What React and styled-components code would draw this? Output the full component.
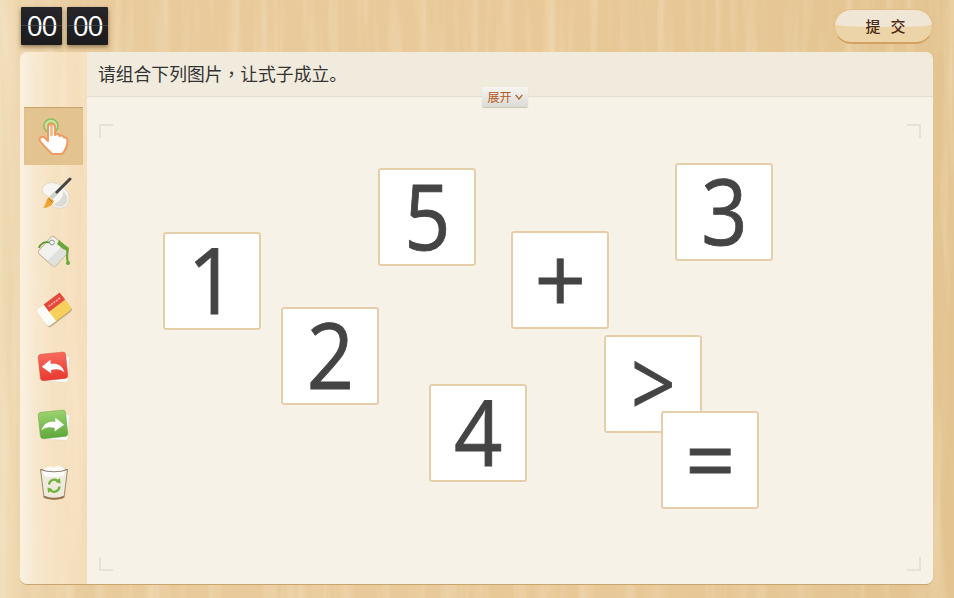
import styled, { createGlobalStyle } from "styled-components";

// vertical wood grain, generated so no image file is needed
const grainSvg = (r, g, b, seed, gain = 1.2, cut = 0.5) =>
  `url("data:image/svg+xml,${encodeURIComponent(
    `<svg xmlns='http://www.w3.org/2000/svg' width='954' height='598'><filter id='g' x='0' y='0' width='100%' height='100%'><feTurbulence type='fractalNoise' baseFrequency='0.07 0.004' numOctaves='4' seed='${seed}'/><feColorMatrix values='0 0 0 0 ${r} 0 0 0 0 ${g} 0 0 0 0 ${b} ${gain} 0 0 0 -${cut}'/></filter><rect width='954' height='598' filter='url(#g)'/></svg>`
  )}")`;

const GlobalStyle = createGlobalStyle`
  html, body {
    margin: 0;
    padding: 0;
    background: #e8cb9c;
  }
  body {
    font-family: "Noto Sans CJK SC", "Liberation Sans", sans-serif;
  }
`;

const Page = styled.div`
  width: 954px;
  height: 598px;
  overflow: hidden;
  display: flex;
  flex-direction: column;
  background-image: ${grainSvg(0.95, 0.83, 0.63, 7, 1, 0.48)}, ${grainSvg(0.78, 0.6, 0.34, 3, 1, 0.46)},
    linear-gradient(90deg, #f1deba 0, #eed6ae 20px, #e9cb9c 90px, #e9c897 60%, #e3c490 100%);
`;

const Header = styled.header`
  height: 52px;
  flex: none;
  display: flex;
  justify-content: space-between;
  padding: 7px 21px 0 21px;
  box-sizing: border-box;
`;

const Timer = styled.div`
  display: flex;
  gap: 5px;
  height: 38px;
`;

const FlipTile = styled.div`
  position: relative;
  width: 41px;
  height: 38px;
  background: linear-gradient(#26262a, #1c1c1f);
  border-radius: 1px;
  box-shadow: 0 2px 4px rgba(70, 45, 15, 0.55);
  color: #fff;
  font-family: "Open Sans", sans-serif;
  font-size: 28px;
  line-height: 36px;
  text-align: center;
  letter-spacing: -1.2px;
  &::after {
    content: "";
    position: absolute;
    left: 0;
    right: 0;
    top: 18px;
    height: 1px;
    background: rgba(90, 90, 90, 0.55);
  }
`;

const SubmitButton = styled.button`
  position: relative;
  width: 99px;
  height: 35px;
  margin-top: 2px;
  padding: 0;
  border: 1.5px solid #e2bd86;
  border-bottom: 2px solid #d2a263;
  border-radius: 18px;
  background: #edd3a8;
  overflow: hidden;
  color: #4a2c12;
  font-family: inherit;
  font-size: 15px;
  font-weight: 500;
  line-height: 28px;
  letter-spacing: 10px;
  text-indent: 14px;
  &::before {
    content: "";
    position: absolute;
    left: 0;
    right: 0;
    top: 0;
    height: 17px;
    background: #efe6d6;
    border-radius: 16px 16px 50% 50% / 16px 16px 3px 3px;
  }
  span {
    position: relative;
  }
`;

const Panel = styled.main`
  display: flex;
  width: 913px;
  height: 532px;
  margin-left: 20px;
  border-radius: 7px;
  overflow: hidden;
  flex: none;
  box-shadow: 0 1px 0 #c9a66f;
`;

const Sidebar = styled.nav`
  width: 67px;
  flex: none;
  padding: 55px 0 0 4px;
  box-sizing: border-box;
  background-image: ${grainSvg(0.97, 0.86, 0.68, 21, 1.1, 0.5)},
    linear-gradient(90deg, #fbf2e2 0, #f8e8cf 14px, #f6e2c2 50%, #f4dcb8 100%);
`;

const Tool = styled.div`
  width: 59px;
  height: 58px;
  display: flex;
  align-items: center;
  justify-content: center;
  box-sizing: border-box;
  svg {
    filter: blur(0.35px);
  }
  ${(p) =>
    p.$active &&
    `background: #e3c491;
     box-shadow: inset 0 1px 1px rgba(150, 110, 60, 0.4);`}
`;

const Content = styled.section`
  flex: 1;
  display: flex;
  flex-direction: column;
  min-width: 0;
`;

const TitleBar = styled.div`
  position: relative;
  height: 45px;
  flex: none;
  box-sizing: border-box;
  padding-left: 11px;
  background: #f1ebde;
  border-bottom: 1px solid #e4dece;
  color: #333;
  font-size: 17.8px;
  line-height: 43px;
`;

const CenteredComma = styled.span`
  font-family: "Noto Sans CJK TC", sans-serif;
`;

const ExpandButton = styled.div`
  position: absolute;
  left: 395px;
  top: 35px;
  z-index: 2;
  width: 46px;
  height: 20px;
  display: flex;
  align-items: center;
  justify-content: center;
  gap: 3px;
  border-radius: 2px;
  background: linear-gradient(#f6f5f1, #dcdad4);
  box-shadow: 0 1px 1px rgba(120, 110, 90, 0.35);
  color: #b65a1c;
  font-size: 12px;
  line-height: 20px;
`;

const Canvas = styled.div`
  position: relative;
  flex: 1;
  background: #f7f2e7;
`;

const Corner = styled.span`
  position: absolute;
  box-sizing: border-box;
  width: 14px;
  height: 14px;
  ${(p) => p.$v}: ${(p) => (p.$v === "top" ? 27 : 13)}px;
  ${(p) => p.$h}: 12px;
  border-${(p) => p.$v}: 2px solid #e6e2d7;
  border-${(p) => p.$h}: 2px solid #e6e2d7;
`;

const Card = styled.div`
  position: absolute;
  left: ${(p) => p.$x - 87}px;
  top: ${(p) => p.$y - 97}px;
  width: 98px;
  height: 98px;
  box-sizing: border-box;
  border: 2px solid #e5cfa9;
  border-radius: 3px;
  background: #fff;
  box-shadow: 0 0 1px #fff;
  color: #444;
  font-family: "Open Sans", sans-serif;
  font-size: 92px;
  line-height: 90px;
  text-align: center;
`;

const Glyph = styled.span`
  display: inline-block;
  transform: scaleX(${(p) => p.$sx});
  -webkit-text-stroke: 0.9px #444;
`;

const ChevronDown = () => (
  <svg width="8" height="6" viewBox="0 0 8 6">
    <path d="M0.7 0.8 L4 5 L7.3 0.8" fill="none" stroke="#a4511a" strokeWidth="1.1" />
  </svg>
);

const HandIcon = () => (
  <svg width="36" height="40" viewBox="0 0 36 40">
    <circle cx="15" cy="10" r="7" fill="#cfe0a0" stroke="#86c061" strokeWidth="1.6" />
    <circle cx="15" cy="10" r="3.8" fill="#8cc63f" />
    <path
      d="M12 11 C12 7 19 7 19 11 V19 C21 17.5 23 18 23.5 20 C25 19 27.5 19.5 28 21.5 C29.5 21 31.5 22 31.5 24.5 C31.5 29 30 34 26 38 H16 C13 35 8 30 4 25 C2.5 22.5 5.5 19.5 8.5 21.5 L12 25 Z"
      fill="#fff"
      stroke="#f09a60"
      strokeWidth="2"
      strokeLinejoin="round"
    />
    <path d="M15.5 10 v9" stroke="#f7b488" strokeWidth="2.6" strokeLinecap="round" />
  </svg>
);

const BrushIcon = () => (
  <svg width="36" height="36" viewBox="0 0 36 36">
    <path
      d="M8 10 C12 5 21 6 27 11 C34 16 35 25 30 30 C25 34 18 32 15 28 C14 24 13 21 10 19 C6 17 5 13 8 10 Z"
      fill="#f7f6f2"
      stroke="#d3ccbc"
      strokeWidth="0.6"
    />
    <path d="M27 15 C32 19 33 25 29 29 C26 32 20 31 17 28 C22 27 28 22 27 15 Z" fill="#dcdbd6" />
    <path d="M34 3 L19 18" stroke="#45453f" strokeWidth="3" strokeLinecap="round" />
    <path d="M20 17 L15 22" stroke="#d2d2cc" strokeWidth="4.4" />
    <path d="M13 21 C10 23 11 27 7 32 C12 32 17 29 18 25 Z" fill="#f0a32d" />
    <path d="M13 23 L16 26" stroke="#8a7a55" strokeWidth="1" />
  </svg>
);

const BucketIcon = () => (
  <svg width="38" height="38" viewBox="0 0 38 38">
    <rect x="7" y="7" width="23" height="23" rx="3" transform="rotate(42 18.5 18.5)" fill="#f1f1ee" stroke="#c8b795" strokeWidth="1" />
    <path d="M19 34 L33 20 L27 13 L12 28 Z" fill="#d9d9d5" opacity="0.7" />
    <circle cx="17" cy="9.5" r="2.4" fill="#f7f7f5" stroke="#8f8f8a" strokeWidth="1" />
    <path d="M14.6 9.5 C9 8 5 11 4 15" fill="none" stroke="#5d9a33" strokeWidth="1.8" />
    <path d="M24 7 L30 12 L34 15 L33 18 L28 16 L22 11 Z" fill="#6ba63b" />
    <path d="M32 16 C33 21 31 25 33 29" fill="none" stroke="#6ba63b" strokeWidth="2.2" />
    <circle cx="33" cy="30" r="2" fill="#6ba63b" />
  </svg>
);

const EraserIcon = () => (
  <svg width="38" height="36" viewBox="0 0 38 36">
    <g transform="rotate(-37 19 18)">
      <rect x="4" y="8.5" width="30" height="21" rx="3" fill="#c2ab84" />
      <rect x="4" y="7.5" width="30" height="20.5" rx="3" fill="#f7d05c" />
      <path d="M7 7.5 H14 V28 H7 A3 3 0 0 1 4 25 V10.5 A3 3 0 0 1 7 7.5 Z" fill="#fbfbfa" />
      <rect x="14" y="7.5" width="20" height="9" fill="#e4483e" />
      <path d="M17 12 h14" stroke="#f6b9a8" strokeWidth="1.6" strokeDasharray="2 1" />
    </g>
  </svg>
);

const PageArrowIcon = ({ from, to, edge, flip }) => (
  <svg width="36" height="36" viewBox="0 1 34 34">
    <rect x="6" y="6" width="25" height="25" rx="2.5" transform="rotate(3 18 18)" fill="#fdfdfb" stroke="#e2d8c4" strokeWidth="0.6" />
    <defs>
      <linearGradient id={`face-${from}`} x1="0" y1="0" x2="0" y2="1">
        <stop offset="0" stopColor={from} />
        <stop offset="1" stopColor={to} />
      </linearGradient>
    </defs>
    <rect x="3" y="4" width="26" height="25" rx="3" transform="rotate(-6 16 16)" fill={`url(#face-${from})`} stroke={edge} strokeWidth="0.5" />
    <path
      d="M5.5 16 L14 10 V14 C20 13.5 25 16 26.5 23 C23 19.5 19 18.8 14 19.8 V23 Z"
      fill="#fff"
      transform={flip ? "translate(32 0) scale(-1 1) rotate(-4 16 16)" : "rotate(-4 16 16)"}
    />
  </svg>
);

const TrashIcon = () => (
  <svg width="32" height="36" viewBox="0 1.5 32 36">
    <path d="M2.5 5 L29.5 5 L26 33 C22 35 10 35 6 33 Z" fill="#eeeade" stroke="#a08a68" strokeWidth="1" />
    <path d="M5 5 C10 2 12 1 16 3 C20 0 24 2 27 5 L26 11 C20 13 11 13 6 11 Z" fill="#fbfbf8" />
    <path d="M2.5 5 C10 8 22 8 29.5 5" fill="none" stroke="#8d8474" strokeWidth="1.2" />
    <path d="M6 32 C11 35 21 35 26 32" fill="none" stroke="#96744a" strokeWidth="1.8" />
    <path d="M11 20 A5.5 5.5 0 0 1 20 16.5" fill="none" stroke="#70b33a" strokeWidth="2.2" />
    <path d="M22 13.5 L22.5 19 L17.5 17.5 Z" fill="#70b33a" />
    <path d="M21.5 22 A5.5 5.5 0 0 1 12 25.5" fill="none" stroke="#70b33a" strokeWidth="2.2" />
    <path d="M10 28.5 L9.5 23 L14.5 24.5 Z" fill="#70b33a" />
  </svg>
);

const cards = [
  { label: "1", x: 163, y: 232, sx: 0.94 },
  { label: "2", x: 281, y: 307, sx: 0.9 },
  { label: "5", x: 378, y: 168, sx: 0.88 },
  { label: "+", x: 511, y: 231, sx: 0.98 },
  { label: "3", x: 675, y: 163, sx: 0.88 },
  { label: ">", x: 604, y: 335, sx: 0.85 },
  { label: "4", x: 429, y: 384, sx: 0.92 },
  { label: "=", x: 661, y: 411, sx: 0.95 },
];

export default function App() {
  return (
    <Page>
      <GlobalStyle />
      <Header>
        <Timer>
          <FlipTile>00</FlipTile>
          <FlipTile>00</FlipTile>
        </Timer>
        <SubmitButton><span>提交</span></SubmitButton>
      </Header>
      <Panel>
        <Sidebar>
          <Tool $active><HandIcon /></Tool>
          <Tool><BrushIcon /></Tool>
          <Tool><BucketIcon /></Tool>
          <Tool><EraserIcon /></Tool>
          <Tool><PageArrowIcon from="#f96a5e" to="#e8392f" edge="#d9483c" /></Tool>
          <Tool><PageArrowIcon from="#9bd36f" to="#5fa83b" edge="#6aa948" flip /></Tool>
          <Tool><TrashIcon /></Tool>
        </Sidebar>
        <Content>
          <TitleBar>
            请组合下列图片<CenteredComma>，</CenteredComma>让式子成立。
            <ExpandButton>展开<ChevronDown /></ExpandButton>
          </TitleBar>
          <Canvas>
            <Corner $v="top" $h="left" />
            <Corner $v="top" $h="right" />
            <Corner $v="bottom" $h="left" />
            <Corner $v="bottom" $h="right" />
            {cards.map((c) => (
              <Card key={c.label} $x={c.x} $y={c.y}><Glyph $sx={c.sx}>{c.label}</Glyph></Card>
            ))}
          </Canvas>
        </Content>
      </Panel>
    </Page>
  );
}
